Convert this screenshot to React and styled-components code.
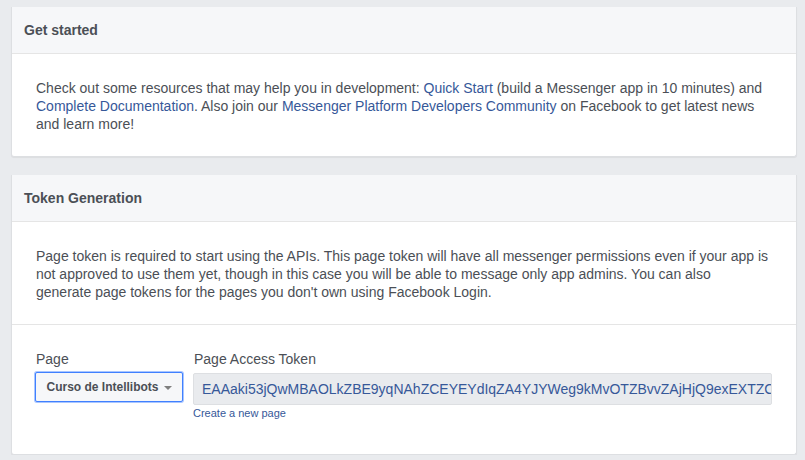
import React from 'react'
import styled, { createGlobalStyle } from 'styled-components'

const GlobalStyle = createGlobalStyle`
  html, body {
    margin: 0;
    padding: 0;
    background: #e9ebee;
    font-family: "Liberation Sans", Helvetica, Arial, sans-serif;
    color: #4b4f56;
  }
`

const Page = styled.div`
  padding: 7px 8px 0 11px;
  display: flex;
  flex-direction: column;
  gap: 18px;
`

const Card = styled.section`
  background: #fff;
  border: 1px solid #dddfe2;
  border-top: none;
  border-radius: 0 0 3px 3px;
  box-shadow: 0 1px 1px rgba(0, 0, 0, 0.06);
`

const CardHeader = styled.header`
  background: #f6f7f9;
  border-bottom: 1px solid #e5e5e5;
  height: 46px;
  padding: 0 12px;
  display: flex;
  align-items: center;
  font-size: 14px;
  font-weight: bold;
  color: #4b4f56;
`

const CardBody = styled.div`
  padding: 25px 24px 23px;
  font-size: 14px;
  line-height: 18px;
  color: #4b4f56;
  border-bottom: ${p => (p.$divided ? '1px solid #e5e5e5' : 'none')};
`

const Link = styled.a`
  color: #365899;
  text-decoration: none;
  cursor: pointer;
`

const FormRow = styled.div`
  display: flex;
  gap: 10px;
  padding: 25px 24px 34px 23px;
`

const Field = styled.div`
  display: flex;
  flex-direction: column;
  flex: ${p => (p.$grow ? 1 : 'none')};
  min-width: 0;
`

const Label = styled.label`
  font-size: 14px;
  line-height: 18px;
  color: #4b4f56;
  margin-bottom: 4px;
  padding-left: 1px;
`

const SelectButton = styled.button`
  width: 148px;
  height: 30px;
  background: #f6f7f9;
  border: 1px solid #4080ff;
  box-shadow: 0 0 0 1px rgba(64, 128, 255, 0.45);
  border-radius: 2px;
  font-family: inherit;
  font-size: 12px;
  font-weight: bold;
  color: #4b4f56;
  display: flex;
  align-items: center;
  justify-content: center;
  gap: 5px;
  padding: 0 8px;
`

const Caret = styled.span`
  width: 0;
  height: 0;
  border-left: 4px solid transparent;
  border-right: 4px solid transparent;
  border-top: 4px solid #7f7f7f;
  margin-top: 1px;
`

const TokenBox = styled.div`
  height: 30px;
  background: #e9ebee;
  border: 1px solid #dddfe2;
  border-radius: 2px;
  display: flex;
  align-items: center;
  padding: 0 8px;
  overflow: hidden;
  white-space: nowrap;
  font-size: 14px;
  color: #365899;
  margin-top: 1px;
`

const SmallLink = styled(Link)`
  font-size: 11px;
  line-height: 14px;
  margin-top: 1px;
`

export default function App() {
  return (
    <>
      <GlobalStyle />
      <Page>
        <Card>
          <CardHeader>Get started</CardHeader>
          <CardBody>
            Check out some resources that may help you in development: <Link>Quick Start</Link> (build a Messenger app in 10 minutes) and
            <br />
            <Link>Complete Documentation</Link>. Also join our <Link>Messenger Platform Developers Community</Link> on Facebook to get latest news
            <br />
            and learn more!
          </CardBody>
        </Card>
        <Card>
          <CardHeader>Token Generation</CardHeader>
          <CardBody $divided>
            Page token is required to start using the APIs. This page token will have all messenger permissions even if your app is
            <br />
            not approved to use them yet, though in this case you will be able to message only app admins. You can also
            <br />
            generate page tokens for the pages you don't own using Facebook Login.
          </CardBody>
          <FormRow>
            <Field>
              <Label>Page</Label>
              <SelectButton>
                Curso de Intellibots <Caret />
              </SelectButton>
            </Field>
            <Field $grow>
              <Label>Page Access Token</Label>
              <TokenBox>EAAaki53jQwMBAOLkZBE9yqNAhZCEYEYdIqZA4YJYWeg9kMvOTZBvvZAjHjQ9exEXTZCkZD8ZBxRkq2aZCZA</TokenBox>
              <SmallLink>Create a new page</SmallLink>
            </Field>
          </FormRow>
        </Card>
      </Page>
    </>
  )
}
